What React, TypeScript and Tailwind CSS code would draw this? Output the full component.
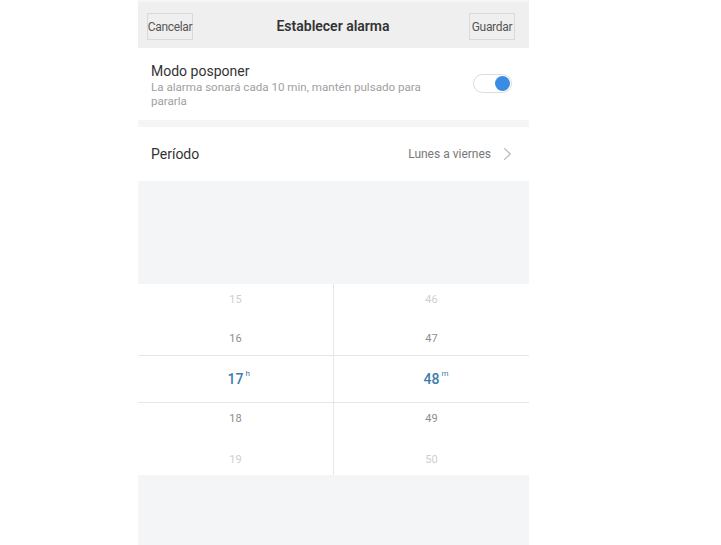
const font = { fontFamily: "Roboto, 'Noto Sans', sans-serif" };

function Wheel({ values, unit }: { values: string[]; unit: string }) {
  return (
    <div className="flex-1 flex flex-col text-center">
      <div className="h-[30px] pt-[2px] flex items-center justify-center text-[11px] text-[#cfcfcf]">{values[0]}</div>
      <div className="h-[41px] pt-[10px] flex items-center justify-center text-[11px] text-[#8d8d8d]">{values[1]}</div>
      <div className="h-[48px] pt-[1px] flex items-center justify-center text-[14px] font-medium text-[#3e7cab]">
        <span className="relative">
          {values[2]}
          <span className="absolute left-full top-[-1px] ml-[2px] text-[8px] font-normal">{unit}</span>
        </span>
      </div>
      <div className="h-[41px] pb-[8px] flex items-center justify-center text-[11px] text-[#8d8d8d]">{values[3]}</div>
      <div className="h-[31px] pt-[1px] flex items-center justify-center text-[11px] text-[#cfcfcf]">{values[4]}</div>
    </div>
  );
}

export default function App() {
  return (
    <div className="w-[721px] h-[545px] bg-white overflow-hidden" style={font}>
      <div className="ml-[138px] w-[391px] h-full bg-[#f4f5f7] flex flex-col">
        {/* Header */}
        <div className="h-[46px] bg-[#efeff0] mt-[2px] pt-[3px] flex items-center justify-between pl-[9px] pr-[14px]">
          <button className="h-[27px] w-[46px] border border-[#d9d9d9] text-[12px] text-[#555] tracking-tight flex items-center justify-center">
            Cancelar
          </button>
          <div className="text-[14px] font-semibold text-[#333] ml-[4px]">Establecer alarma</div>
          <button className="h-[27px] w-[46px] border border-[#d9d9d9] text-[12px] text-[#555] tracking-tight flex items-center justify-center">
            Guardar
          </button>
        </div>

        {/* Snooze */}
        <div className="h-[72px] bg-white flex items-center pl-[13px] pr-[17px]">
          <div className="flex-1 pt-[1px]">
            <div className="text-[14px] leading-[18px] text-[#333]">Modo posponer</div>
            <div className="text-[11.6px] leading-[14px] text-[#a0a0a0] w-[290px]">
              La alarma sonará cada 10 min, mantén pulsado para pararla
            </div>
          </div>
          <div className="w-[39px] h-[19px] rounded-full border border-[#dcdcdc] bg-white flex items-center justify-end pr-[1px] -mt-[2px]">
            <div className="w-[15px] h-[15px] rounded-full bg-[#3a8be3]" />
          </div>
        </div>

        {/* Período */}
        <div className="mt-[7px] h-[54px] bg-white flex items-center pl-[13px] pr-[18px]">
          <div className="flex-1 text-[14px] text-[#333]">Período</div>
          <div className="text-[12px] text-[#777]">Lunes a viernes</div>
          <svg className="ml-[13px]" width="7" height="12" viewBox="0 0 7 12" fill="none">
            <path d="M0.6 0.6 L6.3 6 L0.6 11.4" stroke="#b3b3b3" strokeWidth="1.1" strokeLinecap="round" strokeLinejoin="round" />
          </svg>
        </div>

        <div className="h-[103px]" />

        {/* Picker */}
        <div className="h-[191px] bg-white relative flex">
          <Wheel values={["15", "16", "17", "18", "19"]} unit="h" />
          <div className="w-[1px] bg-[#e6e6e6]" />
          <Wheel values={["46", "47", "48", "49", "50"]} unit="m" />
          <div className="absolute left-0 right-0 top-[71px] h-[48px] border-y border-[#e6e6e6] pointer-events-none" />
        </div>
      </div>
    </div>
  );
}
